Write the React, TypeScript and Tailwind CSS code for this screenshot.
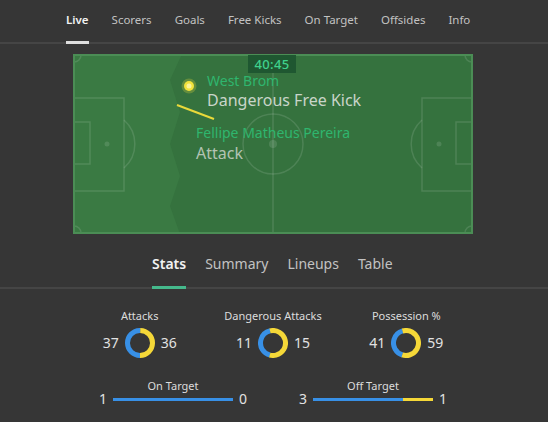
import React from "react";

const FONT = { fontFamily: '"Noto Sans", "Open Sans", sans-serif' };

const BLUE = "#3890e6";
const YELLOW = "#f5d838";

function Donut({ a, b }: { a: number; b: number }) {
  const r = 12.5;
  const C = 2 * Math.PI * r;
  const p = a / (a + b);
  const blueStart = 180 - 180 * p;
  const yellowStart = 180 + 180 * p;
  return (
    <svg width="30" height="30" viewBox="0 0 30 30">
      <circle
        cx="15"
        cy="15"
        r={r}
        fill="none"
        stroke={BLUE}
        strokeWidth="5"
        strokeDasharray={`${p * C} ${C}`}
        transform={`rotate(${blueStart} 15 15)`}
      />
      <circle
        cx="15"
        cy="15"
        r={r}
        fill="none"
        stroke={YELLOW}
        strokeWidth="5"
        strokeDasharray={`${(1 - p) * C} ${C}`}
        transform={`rotate(${yellowStart} 15 15)`}
      />
    </svg>
  );
}

function DonutStat({ label, a, b }: { label: string; a: number; b: number }) {
  return (
    <div className="flex flex-col items-center">
      <div className="text-[11px] leading-[15px] text-[#dcdcdc]">{label}</div>
      <div className="mt-[5px] flex items-center gap-[6px]">
        <span className="text-[14px] leading-[18px] text-[#e2e2e2]">{a}</span>
        <Donut a={a} b={b} />
        <span className="text-[14px] leading-[18px] text-[#e2e2e2]">{b}</span>
      </div>
    </div>
  );
}

function BarStat({ label, a, b }: { label: string; a: number; b: number }) {
  const total = a + b;
  const bw = total === 0 ? 60 : (a / total) * 120;
  return (
    <div className="flex flex-col items-center">
      <div className="text-[11px] leading-[15px] text-[#dcdcdc]">{label}</div>
      <div className="flex h-[12px] items-center gap-[6px]">
        <span className="text-[14px] leading-[12px] text-[#e2e2e2]">{a}</span>
        <div className="flex h-[3px] w-[120px]">
          <div className="h-full bg-[#3890e6]" style={{ width: bw }} />
          <div className="h-full flex-1 bg-[#f5d838]" />
        </div>
        <span className="text-[14px] leading-[12px] text-[#e2e2e2]">{b}</span>
      </div>
    </div>
  );
}

function PitchDrawing() {
  const line = "rgba(255,255,255,0.12)";
  return (
    <svg className="absolute inset-0" width="400" height="180" viewBox="0 0 400 180">
      <rect x="0" y="0" width="400" height="180" fill="#3a7a43" />
      <polygon
        points="109,0 97,26 107,58 97,90 107,122 97,152 107,180 400,180 400,0"
        fill="#35723e"
      />
      <g fill="none" stroke={line} strokeWidth="1.5">
        <line x1="200" y1="0" x2="200" y2="180" />
        <circle cx="200" cy="90" r="30" />
        <rect x="0" y="44" width="51" height="93" />
        <rect x="0" y="68" width="17" height="42" />
        <path d="M 51 66 A 32 32 0 0 1 51 114" />
        <rect x="349" y="44" width="51" height="93" />
        <rect x="383" y="68" width="17" height="42" />
        <path d="M 349 66 A 32 32 0 0 0 349 114" />
        <path d="M 8 1 A 7 7 0 0 1 1 8" />
        <path d="M 392 1 A 7 7 0 0 0 399 8" />
        <path d="M 1 172 A 7 7 0 0 1 8 179" />
        <path d="M 399 172 A 7 7 0 0 0 392 179" />
      </g>
      <circle cx="200" cy="90" r="4" fill={line} />
      <circle cx="34" cy="90" r="2.5" fill={line} />
      <circle cx="366" cy="90" r="2.5" fill={line} />
      <rect x="1" y="1" width="398" height="178" fill="none" stroke="#4b8d55" strokeWidth="2" />
      <circle cx="116" cy="32" r="7.5" fill="rgba(245,225,60,0.25)" />
      <circle cx="116" cy="32" r="5" fill="#f2e23c" />
      <circle cx="116" cy="32" r="2.5" fill="#fbf39a" />
      <line x1="104" y1="51" x2="141" y2="65" stroke="#e9d93a" strokeWidth="2" />
    </svg>
  );
}

export default function App() {
  const topTabs = ["Live", "Scorers", "Goals", "Free Kicks", "On Target", "Offsides", "Info"];
  const subTabs = ["Stats", "Summary", "Lineups", "Table"];
  return (
    <div className="min-h-[422px] w-[548px] bg-[#363636]" style={FONT}>
      <div className="flex h-[44px] gap-[23px] border-b-2 border-[#454545] pl-[66px]">
        {topTabs.map((t, i) => (
          <div key={t} className="relative flex h-[42px] items-center pb-[2px]">
            <span
              className={
                i === 0
                  ? "text-[11.5px] font-semibold text-[#f2f2f2]"
                  : "text-[11.5px] text-[#c2c2c2]"
              }
            >
              {t}
            </span>
            {i === 0 && (
              <div className="absolute -bottom-[2px] left-0 right-0 h-[3px] bg-[#dedede]" />
            )}
          </div>
        ))}
      </div>

      <div className="ml-[73px] mt-[10px] w-[400px]">
        <div className="relative h-[180px] w-[400px] overflow-hidden">
          <PitchDrawing />
          <div className="absolute left-[175px] top-[1px] flex h-[18px] w-[48px] items-center justify-center bg-[#1f5731]">
            <span className="text-[13px] font-medium leading-[16px] tracking-[0.3px] text-[#3fd18c]">
              40:45
            </span>
          </div>
          <div className="absolute left-[134px] top-[19px] flex flex-col">
            <span className="text-[14px] leading-[15px] text-[#2fb66e]">West Brom</span>
            <span className="mt-[2px] text-[16px] leading-[20px] text-[#c9d5c9]">
              Dangerous Free Kick
            </span>
          </div>
          <div className="absolute left-[123px] top-[70px] flex flex-col">
            <span className="whitespace-nowrap text-[14px] leading-[18px] text-[#2fb66e]">
              Fellipe Matheus Pereira
            </span>
            <span className="mt-[1px] text-[16px] leading-[20px] text-[#b3c3b3]">Attack</span>
          </div>
        </div>
      </div>

      <div className="flex h-[55px] gap-[19px] border-b-2 border-[#454545] pl-[152px] pt-[5px]">
        {subTabs.map((t, i) => (
          <div key={t} className="relative flex h-[48px] items-center">
            <span
              className={
                i === 0
                  ? "text-[14px] font-semibold text-[#f2f2f2]"
                  : "text-[14px] text-[#c2c2c2]"
              }
            >
              {t}
            </span>
            {i === 0 && (
              <div className="absolute -bottom-[2px] left-0 right-0 h-[3px] bg-[#45b98c]" />
            )}
          </div>
        ))}
      </div>

      <div className="ml-[73px] w-[400px] pt-[19px]">
        <div className="grid grid-cols-3">
          <DonutStat label="Attacks" a={37} b={36} />
          <DonutStat label="Dangerous Attacks" a={11} b={15} />
          <DonutStat label="Possession %" a={41} b={59} />
        </div>
        <div className="mt-[20px] grid grid-cols-2">
          <BarStat label="On Target" a={1} b={0} />
          <BarStat label="Off Target" a={3} b={1} />
        </div>
      </div>
    </div>
  );
}
